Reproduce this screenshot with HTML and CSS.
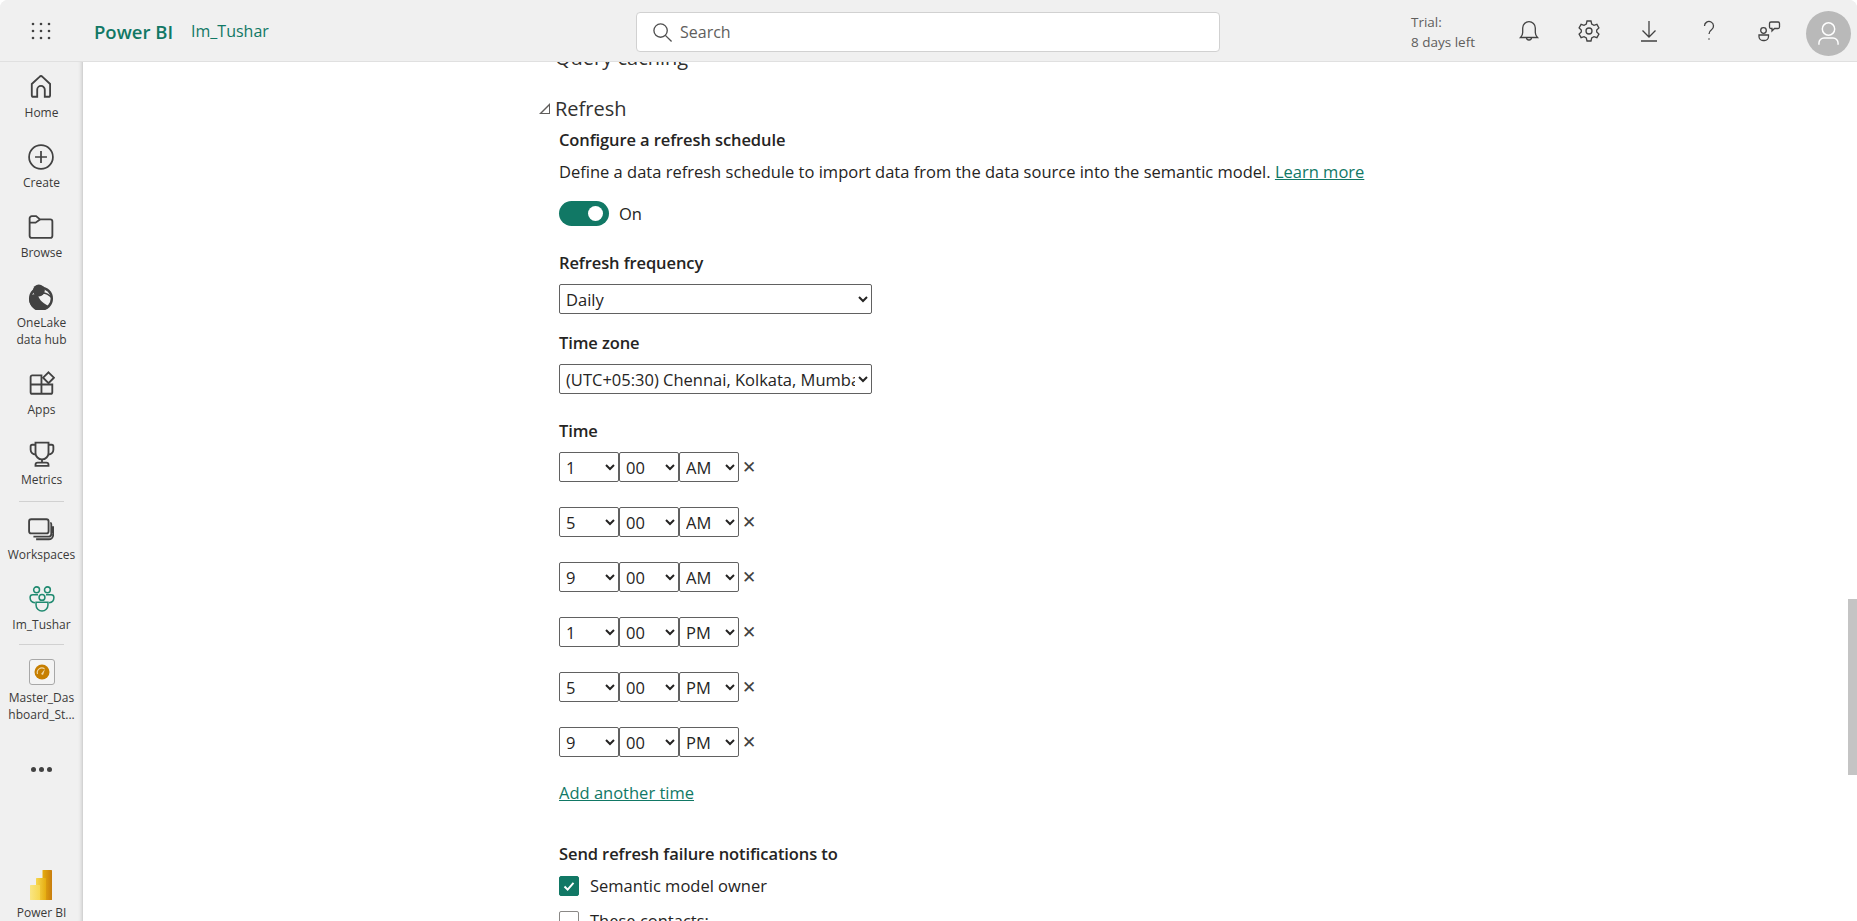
FILE: index.html
```html
<!DOCTYPE html>
<html lang="en">
  <head>
    <meta charset="UTF-8" />
    <title>Power BI - Refresh settings</title>
    <link rel="stylesheet" href="styles.css">
  </head>
  <body>
    <div class="app">
      <header class="topbar">
        <div class="brand">
          <svg class="waffle" viewBox="0 0 20 18" fill="#424242">
            <circle cx="2" cy="2" r="1.3"/><circle cx="10" cy="2" r="1.3"/><circle cx="18" cy="2" r="1.3"/>
            <circle cx="2" cy="9" r="1.3"/><circle cx="10" cy="9" r="1.3"/><circle cx="18" cy="9" r="1.3"/>
            <circle cx="2" cy="16" r="1.3"/><circle cx="10" cy="16" r="1.3"/><circle cx="18" cy="16" r="1.3"/>
          </svg>
          <strong class="brand-name">Power BI</strong>
          <span class="brand-workspace">Im_Tushar</span>
        </div>
        <div class="search">
          <svg viewBox="0 0 22 22" fill="none" stroke="#505050" stroke-width="1.4">
            <circle cx="9" cy="9" r="7"/><path d="M14 14l6.5 6.5"/>
          </svg>
          <span>Search</span>
        </div>
        <div class="tools">
          <div class="trial">Trial:<br>8 days left</div>
          <a class="tool" href="#">
            <svg viewBox="0 0 24 24" fill="none" stroke="#424242" stroke-width="1.3">
              <path d="M3.5 18.5c1.6-1.6 2.2-3 2.2-5V9a6.3 6.3 0 0 1 12.6 0v4.500c0 2 .6 3.400 2.200 5z"/><path d="M9.500 18.500a2.500 2.500 0 0 0 5 0"/>
            </svg>
          </a>
          <a class="tool" href="#">
            <svg viewBox="0 0 24 24" fill="none" stroke="#424242" stroke-width="1.3">
              <path d="M10 2h4l.7 3 2.300 1.300 2.900-.9 2 3.500-2.200 2.100v2l2.200 2.100-2 3.500-2.900-.9L14.700 19l-.7 3h-4l-.7-3L7 17.700l-2.900.9-2-3.500L4.300 13v-2L2.100 8.900l2-3.500 2.900.9L9.300 5z"/><circle cx="12" cy="12" r="3"/>
            </svg>
          </a>
          <a class="tool" href="#">
            <svg viewBox="0 0 24 24" fill="none" stroke="#424242" stroke-width="1.3">
              <path d="M12 2v16M5.500 11.500L12 18l6.500-6.500M4 22h16"/>
            </svg>
          </a>
          <a class="tool" href="#">
            <svg viewBox="0 0 24 24" fill="none" stroke="#424242" stroke-width="1.3">
              <path d="M7.500 7a4.500 4.500 0 1 1 7 3.700c-1.600 1.100-2.500 2-2.500 4.300"/><circle cx="12" cy="20" r=".8" fill="#424242" stroke="none"/>
            </svg>
          </a>
          <a class="tool" href="#">
            <svg viewBox="0 0 24 24" fill="none" stroke="#424242" stroke-width="1.3">
              <circle cx="6.500" cy="11.500" r="2.800"/><path d="M2 16h9.500v1.500a4 4 0 0 1-4 4H6a4 4 0 0 1-4-4z"/><path d="M14 3h7a1.500 1.500 0 0 1 1.500 1.500V8A1.500 1.500 0 0 1 21 9.500h-3.500L15 12V9.500h-1A1.500 1.500 0 0 1 12.500 8V4.500A1.500 1.500 0 0 1 14 3z"/>
            </svg>
          </a>
          <div class="avatar">
            <svg viewBox="0 0 24 24" fill="none" stroke="#fff" stroke-width="1.300">
              <circle cx="12" cy="8" r="5.500"/><path d="M3.500 22v-1.500A4.500 4.500 0 0 1 8 16h8a4.500 4.500 0 0 1 4.500 4.500V22"/>
            </svg>
          </div>
        </div>
      </header>

      <nav class="rail">
        <a class="rail-item" href="#">
          <svg viewBox="0 0 24 24" fill="none" stroke="#424242" stroke-width="1.700">
            <path d="M10.600 2.600a2 2 0 0 1 2.800 0l7 6.600v10.300a1.500 1.500 0 0 1-1.500 1.500H15.500v-6.500a3.500 3.500 0 0 0-7 0V21H5a1.500 1.500 0 0 1-1.500-1.500V9.200z"/>
          </svg>
          <span>Home</span>
        </a>
        <a class="rail-item" href="#">
          <svg viewBox="0 0 24 24" fill="none" stroke="#424242" stroke-width="1.600">
            <circle cx="12" cy="12" r="11"/><path d="M12 6.500v11M6.500 12h11"/>
          </svg>
          <span>Create</span>
        </a>
        <a class="rail-item" href="#">
          <svg viewBox="0 0 24 24" fill="none" stroke="#424242" stroke-width="1.700">
            <path d="M1.500 4a2 2 0 0 1 2-2h4l3.500 3h9.500a2 2 0 0 1 2 2v13a2 2 0 0 1-2 2h-17a2 2 0 0 1-2-2z"/><path d="M1.500 8H7l4-3"/>
          </svg>
          <span>Browse</span>
        </a>
        <a class="rail-item" href="#">
          <svg viewBox="0 0 24 24">
            <circle cx="12" cy="13.500" r="10" fill="#f0f0f0" stroke="#424242" stroke-width="2.200"/>
            <circle cx="10" cy="6" r="5.500" fill="#424242"/>
            <path d="M9 9C9.500 13 12 17 19.500 20.500A10 10 0 0 1 2.500 10z" fill="#424242"/>
            <path d="M9 9.500C13 7.500 18 8.500 22 12.500" fill="none" stroke="#424242" stroke-width="1.500"/>
          </svg>
          <span>OneLake<br>data hub</span>
        </a>
        <a class="rail-item" href="#">
          <svg viewBox="0 0 24 24" fill="none" stroke="#424242" stroke-width="1.700">
            <path d="M3 4h8.500v17H3a1.500 1.500 0 0 1-1.500-1.500v-14A1.500 1.500 0 0 1 3 4zM1.500 12.500h20M11.500 12.500h10V19.500a1.500 1.500 0 0 1-1.500 1.500h-8.500z"/><path d="M18 1.200l5 5-5 5-5-5z"/>
          </svg>
          <span>Apps</span>
        </a>
        <a class="rail-item" href="#">
          <svg viewBox="0 0 24 24" fill="none" stroke="#424242" stroke-width="1.700">
            <path d="M6 1.500h12V11a6 6 0 0 1-12 0z"/><path d="M6 3.500H3a1.500 1.500 0 0 0-1.500 1.500v3A4.500 4.500 0 0 0 6 12.500M18 3.500h3A1.500 1.500 0 0 1 22.500 5v3a4.500 4.500 0 0 1-4.500 4.500M12 17v3M6 23v-1a2 2 0 0 1 2-2h8a2 2 0 0 1 2 2v1z"/>
          </svg>
          <span>Metrics</span>
        </a>
        <div class="rail-divider"></div>
        <a class="rail-item" href="#">
          <svg viewBox="0 0 24 24" fill="none" stroke="#424242" stroke-width="1.700">
            <rect x="1" y="3" width="18" height="13" rx="2"/><path d="M20.500 6.500c.5 0 1 .5 1 1v9a2.500 2.500 0 0 1-2.500 2.500H5M23.200 9.500v8a4 4 0 0 1-4 4H7.500"/>
          </svg>
          <span>Workspaces</span>
        </a>
        <a class="rail-item is-active" href="#">
          <svg viewBox="0 0 24 24" fill="none" stroke="#1f8a70" stroke-width="1.400">
            <circle cx="7" cy="3.500" r="2.700"/><circle cx="17" cy="3.500" r="2.700"/><circle cx="12" cy="10.500" r="2.700"/>
            <path d="M8.300 8H3.500A2.500 2.500 0 0 0 1 10.500c0 2.500 1.500 4.500 4.500 5M15.700 8h4.800a2.500 2.500 0 0 1 2.500 2.500c0 2.500-1.500 4.500-4.500 5"/>
            <path d="M6.500 15h11v2.500a5.500 5.500 0 0 1-11 0z"/>
          </svg>
          <span>Im_Tushar</span>
        </a>
        <div class="rail-divider is-second"></div>
        <a class="rail-item" href="#">
          <div class="report-tile">
            <svg viewBox="0 0 16 16">
              <circle cx="8" cy="8" r="7.500" fill="#c77f00"/>
              <path d="M3.500 10a4.600 4.600 0 0 1 7-5.200" fill="none" stroke="#f1d9a8" stroke-width="1.100"/>
              <path d="M7 10l4-5-2 6z" fill="#f1d9a8"/>
            </svg>
          </div>
          <span>Master_Das<br>hboard_St...</span>
        </a>
        <a class="rail-more" href="#"><i></i><i></i><i></i></a>
        <a class="rail-logo" href="#">
          <svg viewBox="0 0 22 30">
            <defs>
              <linearGradient id="barA" x1="0" x2="1"><stop offset="0" stop-color="#e6ad10"/><stop offset="1" stop-color="#c87d0e"/></linearGradient>
              <linearGradient id="barB" x1="0" x2="1"><stop offset="0" stop-color="#f6d751"/><stop offset="1" stop-color="#e6ad10"/></linearGradient>
              <linearGradient id="barC" x1="0" x2="1"><stop offset="0" stop-color="#f9e583"/><stop offset="1" stop-color="#f6d751"/></linearGradient>
            </defs>
            <rect x="12.500" y="0" width="9.500" height="30" rx=".5" fill="url(#barA)"/>
            <rect x="6" y="8" width="10" height="22" rx=".5" fill="url(#barB)"/>
            <rect x="0" y="15" width="10" height="15" rx=".5" fill="url(#barC)"/>
          </svg>
          <span>Power BI</span>
        </a>
      </nav>

      <main class="content">
        <h2 class="section-title is-scrolled">Query caching</h2>
        <h2 class="section-title"><span class="caret"></span>Refresh</h2>

        <div class="section-body">
          <h3 class="field-label">Configure a refresh schedule</h3>
          <p class="description">Define a data refresh schedule to import data from the data source into the semantic model. <a href="#">Learn more</a></p>

          <div class="toggle-row">
            <span class="toggle"><i></i></span>
            <span>On</span>
          </div>

          <h3 class="field-label frequency-label">Refresh frequency</h3>
          <select class="wide-select">
            <option>Daily</option>
          </select>

          <h3 class="field-label zone-label">Time zone</h3>
          <select class="wide-select">
            <option>(UTC+05:30) Chennai, Kolkata, Mumbai, New Delhi</option>
          </select>

          <h3 class="field-label time-label">Time</h3>
          <div class="time-row">
            <select><option>1</option></select><select><option>00</option></select><select><option>AM</option></select>
            <span class="remove">&#x2715;</span>
          </div>
          <div class="time-row">
            <select><option>5</option></select><select><option>00</option></select><select><option>AM</option></select>
            <span class="remove">&#x2715;</span>
          </div>
          <div class="time-row">
            <select><option>9</option></select><select><option>00</option></select><select><option>AM</option></select>
            <span class="remove">&#x2715;</span>
          </div>
          <div class="time-row">
            <select><option>1</option></select><select><option>00</option></select><select><option>PM</option></select>
            <span class="remove">&#x2715;</span>
          </div>
          <div class="time-row">
            <select><option>5</option></select><select><option>00</option></select><select><option>PM</option></select>
            <span class="remove">&#x2715;</span>
          </div>
          <div class="time-row">
            <select><option>9</option></select><select><option>00</option></select><select><option>PM</option></select>
            <span class="remove">&#x2715;</span>
          </div>

          <a class="add-time" href="#">Add another time</a>

          <h3 class="field-label notify-label">Send refresh failure notifications to</h3>
          <div class="check-row">
            <span class="checkbox is-checked">
              <svg viewBox="0 0 20 20" fill="none" stroke="#fff" stroke-width="2.200"><path d="M5 10.500l3.500 3.500L15 6.500"/></svg>
            </span>
            <span>Semantic model owner</span>
          </div>
          <div class="check-row">
            <span class="checkbox"></span>
            <span>These contacts:</span>
          </div>
        </div>
      </main>

      <div class="scroll-thumb"></div>
    </div>
  </body>
</html>
```

FILE: styles.css
```css
* {
  box-sizing: border-box;
}
html,
body {
  height: 100%;
  margin: 0;
  background: #fff;
  overflow: hidden;
}
body {
  font-family: "Open Sans", "Noto Sans", sans-serif;
  color: #252423;
}
a {
  text-decoration: none;
  color: inherit;
}

.app {
  position: relative;
  height: 100%;
  display: grid;
  grid-template-columns: 83px 1fr;
  grid-template-rows: 62px 1fr;
  background: #f0f0f0;
  border-radius: 8px 8px 0 0;
  overflow: hidden;
}

/* top bar */
.topbar {
  grid-column: 1 / 3;
  display: grid;
  grid-template-columns: 636px 584px 1fr;
  align-items: center;
  background: #f0f0f0;
  box-shadow: inset 0 -1px 0 #e0e0e0;
  z-index: 3;
}
.brand {
  display: flex;
  align-items: center;
  padding-left: 31px;
}
.waffle {
  width: 20px;
  height: 18px;
  margin-right: 43px;
}
.brand-name {
  font-size: 18.500px;
  font-weight: 600;
  color: #117865;
  margin-right: 18px;
}
.brand-workspace {
  font-size: 16px;
  color: #117865;
}
.search {
  height: 40px;
  margin-top: 2px;
  display: flex;
  align-items: center;
  padding-left: 15px;
  background: #fff;
  border: 1px solid #d1d1d1;
  border-radius: 4px;
  font-size: 16px;
  color: #605e5c;
}
.search svg {
  width: 21px;
  height: 21px;
  margin-right: 7px;
}
.tools {
  display: flex;
  align-items: center;
  padding-left: 191px;
}
.trial {
  width: 88px;
  margin-top: 2px;
  font-size: 13.500px;
  line-height: 20px;
  color: #605e5c;
}
.tool {
  width: 60px;
  display: flex;
  justify-content: center;
}
.tool svg {
  width: 24px;
  height: 24px;
}
.avatar {
  width: 45px;
  height: 45px;
  margin-left: 7px;
  margin-top: 4px;
  border-radius: 50%;
  background: #b9b9b9;
  display: flex;
  align-items: center;
  justify-content: center;
}
.avatar svg {
  width: 27px;
  height: 27px;
}

/* left rail */
.rail {
  display: flex;
  flex-direction: column;
  align-items: center;
  padding-top: 12px;
  background: #f0f0f0;
  box-shadow: inset -5px 0 5px -5px rgba(0, 0, 0, 0.28);
  z-index: 2;
}
.rail-item {
  display: flex;
  flex-direction: column;
  align-items: center;
  margin-bottom: 23px;
  font-size: 12px;
  line-height: 17px;
  text-align: center;
  color: #3b3a39;
}
.rail-item svg {
  width: 26px;
  height: 26px;
  display: block;
}
.rail-item span {
  margin-top: 4px;
  white-space: nowrap;
}
.rail-divider {
  width: 45px;
  height: 1px;
  background: #d1d1d1;
  margin: -10px 0 14px;
}
.rail-divider.is-second {
  margin-top: -12px;
}
.report-tile {
  width: 26px;
  height: 26px;
  display: flex;
  align-items: center;
  justify-content: center;
  background: #f4f4f4;
  border: 1px solid #a8a8a8;
  border-radius: 3px;
}
.report-tile svg {
  width: 16px;
  height: 16px;
}
.rail-more {
  display: flex;
  gap: 3px;
  height: 10px;
  align-items: center;
  margin-top: 18px;
}
.rail-more i {
  width: 5px;
  height: 5px;
  border-radius: 50%;
  background: #424242;
}
.rail-logo {
  margin-top: auto;
  display: flex;
  flex-direction: column;
  align-items: center;
  font-size: 12px;
  line-height: 17px;
  color: #3b3a39;
}
.rail-logo svg {
  width: 22px;
  height: 30px;
  margin-bottom: 4px;
}

/* settings content */
.content {
  background: #fff;
  overflow: hidden;
  padding-left: 472px;
  font-size: 16.500px;
  line-height: 22px;
}
.section-title {
  position: relative;
  margin: 24px 0 7px;
  font-size: 20px;
  font-weight: 400;
  line-height: 27px;
  color: #323130;
}
.section-title.is-scrolled {
  margin-top: -18px;
}
.caret {
  position: absolute;
  left: -16px;
  top: 8px;
  width: 0;
  height: 0;
  border-style: solid;
  border-width: 0 0 11px 11px;
  border-color: transparent transparent #605e5c transparent;
}
.caret::after {
  content: "";
  position: absolute;
  left: -8px;
  top: 2.500px;
  border-style: solid;
  border-width: 0 0 7.500px 7.500px;
  border-color: transparent transparent #fff transparent;
}
.section-body {
  padding-left: 4px;
}
.field-label {
  margin: 0;
  font-size: 16.500px;
  font-weight: 600;
  line-height: 22px;
  letter-spacing: -0.1px;
}
.description {
  margin: 10px 0 0;
}
.description a,
.add-time {
  color: #117865;
  text-decoration: underline;
}
.toggle-row {
  display: flex;
  align-items: center;
  gap: 10px;
  height: 25px;
  margin-top: 18px;
}
.toggle {
  width: 50px;
  height: 25px;
  padding-right: 6px;
  display: flex;
  align-items: center;
  justify-content: flex-end;
  border-radius: 13px;
  background: #117865;
}
.toggle i {
  width: 15px;
  height: 15px;
  border-radius: 50%;
  background: #fff;
}
.frequency-label {
  margin-top: 26px;
  margin-bottom: 10px;
}
.zone-label {
  margin-top: 18px;
  margin-bottom: 10px;
}
.time-label {
  margin-top: 26px;
  margin-bottom: 10px;
}
select {
  height: 30px;
  font-family: inherit;
  font-size: 16.500px;
  color: #252423;
  background-color: #fff;
  border: 1px solid #616161;
  border-radius: 2px;
  padding: 0 0 0 2px;
  display: block;
}
.wide-select {
  width: 313px;
}
.time-row {
  display: flex;
  align-items: center;
  height: 30px;
  margin-bottom: 25px;
}
.time-row select {
  width: 60px;
}
.remove {
  margin-left: 3px;
  font-size: 17px;
  line-height: 20px;
  font-family: "DejaVu Sans", sans-serif;
  color: #424242;
}
.add-time {
  display: block;
  width: max-content;
  margin-top: 25px;
}
.notify-label {
  margin-top: 39px;
  margin-bottom: 11px;
}
.check-row {
  display: flex;
  align-items: center;
  gap: 11px;
  height: 20px;
  margin-bottom: 15px;
}
.checkbox {
  width: 20px;
  height: 20px;
  border: 1px solid #8a8886;
  border-radius: 2px;
}
.checkbox.is-checked {
  background: #117865;
  border-color: #117865;
}
.checkbox svg {
  display: block;
  width: 18px;
  height: 18px;
}
.scroll-thumb {
  position: absolute;
  right: 0;
  top: 599px;
  width: 9px;
  height: 176px;
  background: #c4c4c4;
  z-index: 1;
}
```
